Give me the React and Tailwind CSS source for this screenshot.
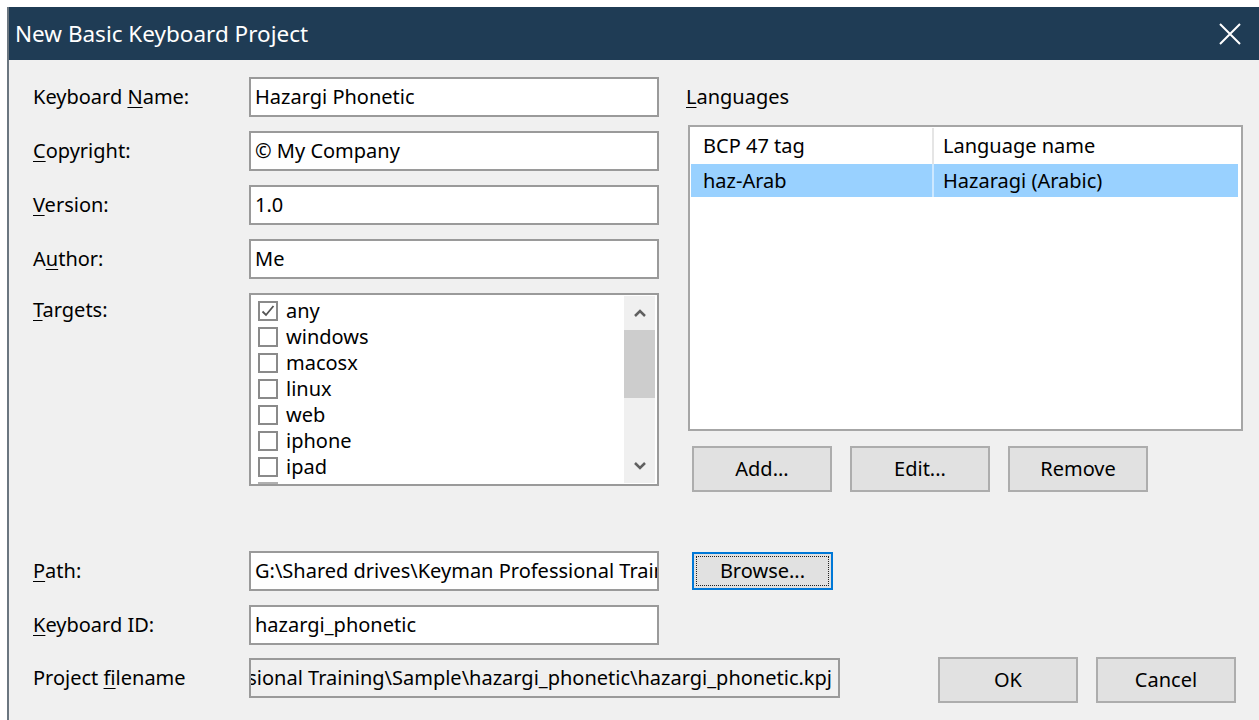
import React from 'react';

const font = { fontFamily: '"Noto Sans", "Open Sans", sans-serif' };

// Label with one underlined access-key letter
function Label({ before = '', keyChar, after = '' }) {
  return (
    <span>
      {before}
      <span className="underline underline-offset-[3px] decoration-1">{keyChar}</span>
      {after}
    </span>
  );
}

function TextBox({ value, className = '', readOnly = false, alignEnd = false }) {
  return (
    <div
      className={`h-[40px] border-2 border-[#9a9a9a] flex items-center overflow-hidden whitespace-nowrap px-[4px] ${
        readOnly ? 'bg-[#f0f0f0]' : 'bg-white'
      } ${alignEnd ? 'justify-end pr-[6px]' : ''} ${className}`}
    >
      <span className="shrink-0">{value}</span>
    </div>
  );
}

function Button({ children, focused = false, className = '' }) {
  if (focused) {
    return (
      <div className={`border-2 border-[#0078d7] bg-[#e1e1e1] p-[2px] ${className}`}>
        <div className="h-full border border-dotted border-[#222] flex items-center justify-center">
          {children}
        </div>
      </div>
    );
  }
  return (
    <div className={`border-2 border-[#adadad] bg-[#e1e1e1] flex items-center justify-center ${className}`}>
      {children}
    </div>
  );
}

function CheckBox({ checked }) {
  return (
    <div className="w-[20px] h-[20px] border-2 border-[#8a8a8a] bg-white flex items-center justify-center shrink-0">
      {checked && (
        <svg width="16" height="16" viewBox="0 0 16 16">
          <path d="M2.5 8.5 L6 12 L13.5 3" fill="none" stroke="#555" strokeWidth="1.8" />
        </svg>
      )}
    </div>
  );
}

const targets = ['any', 'windows', 'macosx', 'linux', 'web', 'iphone', 'ipad'];

function TargetList() {
  return (
    <div className="w-[410px] h-[193px] border-2 border-[#9a9a9a] bg-white flex overflow-hidden">
      <div className="flex-1 pl-[7px] pt-[3px] overflow-hidden">
        {targets.map((t, i) => (
          <div key={t} className="h-[26px] flex items-center gap-[8px]">
            <CheckBox checked={i === 0} />
            <span>{t}</span>
          </div>
        ))}
        <div className="h-[4px] w-[20px] border-t-2 border-[#b0b0b0] mt-[2px]" />
      </div>
      <div className="w-[31px] my-[1px] mr-[2px] bg-[#f0f0f0] flex flex-col items-center">
        <div className="h-[34px] flex items-center justify-center">
          <svg width="14" height="10" viewBox="0 0 14 10">
            <path d="M2 8 L7 3 L12 8" fill="none" stroke="#606060" strokeWidth="2.5" />
          </svg>
        </div>
        <div className="w-full h-[68px] bg-[#cdcdcd]" />
        <div className="flex-1" />
        <div className="h-[34px] flex items-center justify-center">
          <svg width="14" height="10" viewBox="0 0 14 10">
            <path d="M2 2 L7 7 L12 2" fill="none" stroke="#606060" strokeWidth="2.5" />
          </svg>
        </div>
      </div>
    </div>
  );
}

function LanguageList() {
  return (
    <div className="w-[555px] h-[306px] border-2 border-[#a6a6a6] bg-white pt-[1px] px-[1px]">
      <div className="flex h-[36px] items-center">
        <div className="w-[243px] pl-[12px] border-r-2 border-[#e5e5e5] h-full flex items-center">BCP 47 tag</div>
        <div className="flex-1 pl-[9px]">Language name</div>
      </div>
      <div className="flex h-[33px] items-center bg-[#99d1ff] mr-[2px]">
        <div className="w-[243px] pl-[12px] border-r-2 border-[#cde8ff] h-full flex items-center">haz-Arab</div>
        <div className="flex-1 pl-[9px]">Hazaragi (Arabic)</div>
      </div>
    </div>
  );
}

export default function App() {
  return (
    <div className="w-[1259px] h-[720px] bg-white overflow-hidden flex flex-col text-[20px] text-black" style={font}>
      <div className="h-[7px] shrink-0" />
      <div className="flex-1 flex min-h-0">
        <div className="w-[7px] shrink-0" />
        <div className="flex-1 min-w-0 flex flex-col border-l-2 border-[#6b7680] min-h-0">
          {/* title bar */}
          <div className="h-[53px] bg-[#1f3c55] flex items-center justify-between pl-[6px] pr-[18px] shrink-0">
            <span className="text-white text-[22.5px]">New Basic Keyboard Project</span>
            <svg width="22" height="22" viewBox="0 0 22 22">
              <path d="M1 1 L21 21 M21 1 L1 21" stroke="#fff" strokeWidth="2" />
            </svg>
          </div>

          {/* dialog body */}
          <div className="flex-1 bg-[#f0f0f0] pl-[24px] pt-[17px]">
            <div className="flex items-start">
              <div className="flex flex-col gap-[14px]">
                <div className="flex items-center">
                  <div className="w-[216px]"><Label before="Keyboard " keyChar="N" after="ame:" /></div>
                  <TextBox value="Hazargi Phonetic" className="w-[410px]" />
                </div>
                <div className="flex items-center">
                  <div className="w-[216px]"><Label keyChar="C" after="opyright:" /></div>
                  <TextBox value="© My Company" className="w-[410px]" />
                </div>
                <div className="flex items-center">
                  <div className="w-[216px]"><Label keyChar="V" after="ersion:" /></div>
                  <TextBox value="1.0" className="w-[410px]" />
                </div>
                <div className="flex items-center">
                  <div className="w-[216px]"><Label before="A" keyChar="u" after="thor:" /></div>
                  <TextBox value="Me" className="w-[410px]" />
                </div>
                <div className="flex items-start">
                  <div className="w-[216px] pt-[2px]"><Label keyChar="T" after="argets:" /></div>
                  <TargetList />
                </div>
              </div>

              <div className="ml-[27px] flex flex-col">
                <div className="h-[40px] flex items-center"><Label keyChar="L" after="anguages" /></div>
                <div className="mt-[8px] ml-[2px]"><LanguageList /></div>
                <div className="flex gap-[18px] ml-[6px] mt-[15px]">
                  <Button className="w-[140px] h-[46px]">Add...</Button>
                  <Button className="w-[140px] h-[46px]">Edit...</Button>
                  <Button className="w-[140px] h-[46px]">Remove</Button>
                </div>
              </div>
            </div>

            <div className="flex flex-col mt-[59px]">
              <div className="flex items-center">
                <div className="w-[216px]"><Label keyChar="P" after="ath:" /></div>
                <TextBox
                  value="G:\Shared drives\Keyman Professional Training\Sample\hazargi_phonetic"
                  className="w-[410px]"
                />
                <Button focused className="ml-[33px] w-[141px] h-[38px]">Browse...</Button>
              </div>
              <div className="flex items-center mt-[14px]">
                <div className="w-[216px]"><Label keyChar="K" after="eyboard ID:" /></div>
                <TextBox value="hazargi_phonetic" className="w-[410px]" />
              </div>
              <div className="flex items-start mt-[13px]">
                <div className="w-[216px] h-[40px] flex items-center"><Label before="Project " keyChar="f" after="ilename" /></div>
                <TextBox
                  value="G:\Shared drives\Keyman Professional Training\Sample\hazargi_phonetic\hazargi_phonetic.kpj"
                  className="w-[591px]"
                  readOnly
                  alignEnd
                />
                <div className="ml-auto mr-[23px] -mt-[1px] flex gap-[18px]">
                  <Button className="w-[140px] h-[46px]">OK</Button>
                  <Button className="w-[140px] h-[46px]">Cancel</Button>
                </div>
              </div>
            </div>
          </div>
        </div>
      </div>
    </div>
  );
}
